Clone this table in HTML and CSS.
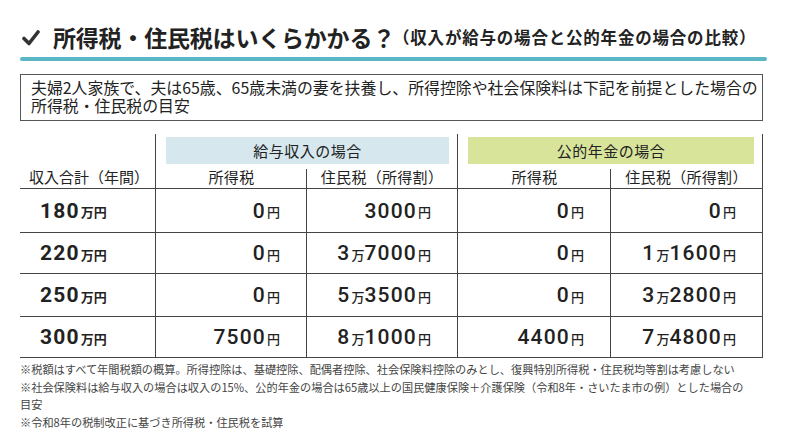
FILE: index.html
```html
<!DOCTYPE html>
<html lang="ja">
<head>
<meta charset="utf-8">
<link rel="stylesheet" href="styles.css">
</head>
<body>
<div class="page">
  <h1 class="title">
    <svg class="check" viewBox="0 0 18 18" width="18" height="18"><path d="M2 9.5 L7 14.5 L16 3" fill="none" stroke="#333" stroke-width="3.6" stroke-linecap="round" stroke-linejoin="round"/></svg>
    <span class="main">所得税・住民税はいくらかかる&#xFF1F;</span><span class="sub">&#xFF08;収入が給与の場合と公的年金の場合の比較&#xFF09;</span>
  </h1>
  <div class="rule"></div>
  <div class="premise">
    <div class="pl">夫婦2人家族で、夫は65歳、65歳未満の妻を扶養し、所得控除や社会保険料は下記を前提とした場合の</div>
    <div class="pl">所得税・住民税の目安</div>
  </div>

  <div class="table">
    <div class="c g0"></div>
    <div class="c g1"><span class="band blue">給与収入の場合</span></div>
    <div class="c g2"><span class="band green">公的年金の場合</span></div>

    <div class="c h first">収入合計&#xFF08;年間&#xFF09;</div>
    <div class="c h l1">所得税</div>
    <div class="c h l2">住民税&#xFF08;所得割&#xFF09;</div>
    <div class="c h l1">所得税</div>
    <div class="c h l2">住民税&#xFF08;所得割&#xFF09;</div>

    <div class="c r inc">180<small>万円</small></div>
    <div class="c r v">0<small>円</small></div>
    <div class="c r v">3000<small>円</small></div>
    <div class="c r v">0<small>円</small></div>
    <div class="c r v">0<small>円</small></div>

    <div class="c r inc">220<small>万円</small></div>
    <div class="c r v">0<small>円</small></div>
    <div class="c r v">3<small>万</small>7000<small>円</small></div>
    <div class="c r v">0<small>円</small></div>
    <div class="c r v">1<small>万</small>1600<small>円</small></div>

    <div class="c r inc">250<small>万円</small></div>
    <div class="c r v">0<small>円</small></div>
    <div class="c r v">5<small>万</small>3500<small>円</small></div>
    <div class="c r v">0<small>円</small></div>
    <div class="c r v">3<small>万</small>2800<small>円</small></div>

    <div class="c r inc">300<small>万円</small></div>
    <div class="c r v">7500<small>円</small></div>
    <div class="c r v">8<small>万</small>1000<small>円</small></div>
    <div class="c r v">4400<small>円</small></div>
    <div class="c r v">7<small>万</small>4800<small>円</small></div>
  </div>

  <div class="notes">
    <p>※税額はすべて年間税額の概算。所得控除は、基礎控除、配偶者控除、社会保険料控除のみとし、復興特別所得税・住民税均等割は考慮しない</p>
    <p>※社会保険料は給与収入の場合は収入の15%、公的年金の場合は65歳以上の国民健康保険&#xFF0B;介護保険&#xFF08;令和8年・さいたま市の例&#xFF09;とした場合の<br>目安</p>
    <p>※令和8年の税制改正に基づき所得税・住民税を試算</p>
  </div>
</div>
</body>
</html>
```

FILE: styles.css
```css
* { box-sizing: border-box; margin: 0; padding: 0; }
html, body { background: #fff; }
body {
  font-family: "Noto Sans CJK JP", "Noto Sans", sans-serif;
  color: #222;
}
.page {
  width: 800px;
  height: 435px;
  padding: 22px 37px 0 20px;
  overflow: hidden;
}
.title {
  display: flex;
  align-items: center;
  height: 30px;
  font-weight: 700;
  white-space: nowrap;
}
.check { margin: 2px 13px 0 2px; flex: none; width: 18px; height: 18px; }
.main { font-size: 23px; letter-spacing: -0.2px; line-height: 30px; }
.sub { font-size: 16.5px; line-height: 30px; margin-left: -2px; letter-spacing: 0.8px; }
.rule {
  height: 4px;
  background: #5bb6c6;
  border-radius: 2px;
  margin-top: 5px;
  width: 747px;
}
.premise {
  margin-top: 13px;
  border: 1px solid #555;
  width: 743px;
  height: 47px;
  padding: 4px 0 0 10px;
  font-size: 15.9px;
  color: #222;
}
.pl { height: 18px; line-height: 18px; white-space: nowrap; }
.table {
  margin-top: 13px;
  width: 743px;
  display: grid;
  grid-template-columns: 136px 151px 151px 153px 152px;
  grid-template-rows: 32px 23px 44px 41px 43px 41px;
}
.c { display: flex; align-items: center; }
.g0 { border-right: 1px solid #444; }
.g1, .g2 {
  grid-column: span 2;
  padding: 3px 8px 2px 10px;
  border-right: 1px solid #444;
}
.band {
  display: flex;
  align-items: center;
  justify-content: center;
  width: 100%;
  height: 100%;
  font-size: 15px;
  letter-spacing: 0.5px;
}
.blue { background: #d6e8ee; }
.green { background: #d7e49a; }
.h {
  font-size: 15px;
  letter-spacing: 0.3px;
  justify-content: center;
  border-bottom: 1px solid #444;
  position: relative;
  padding-bottom: 2px;
}
.first { justify-content: flex-start; padding-left: 9px; border-right: 1px solid #444; letter-spacing: 0; }
.l2 { border-right: 1px solid #444; }
.l1::after {
  content: "";
  position: absolute;
  right: 0;
  top: 3px;
  bottom: -1px;
  border-right: 1px solid #444;
}
.r {
  border-bottom: 1px solid #444;
  border-right: 1px solid #444;
  font-family: "Roboto", "Noto Sans", sans-serif;
  letter-spacing: 1.2px;
  font-size: 21px;
}
.r small {
  font-family: "Noto Sans CJK JP", sans-serif;
  font-size: 13px;
  letter-spacing: 0;
  margin-left: 1px;
  position: relative;
  top: 1px;
}
.inc {
  font-weight: 700;
  padding-left: 20px;
}
.inc small { font-weight: 700; }
.v {
  justify-content: flex-end;
  font-weight: 500;
  padding-right: 26px;
}
.v small { font-weight: 500; }
.notes {
  margin-top: 3px;
  font-size: 11.2px;
  line-height: 17.6px;
  color: #444;
  width: 750px;
}
```
